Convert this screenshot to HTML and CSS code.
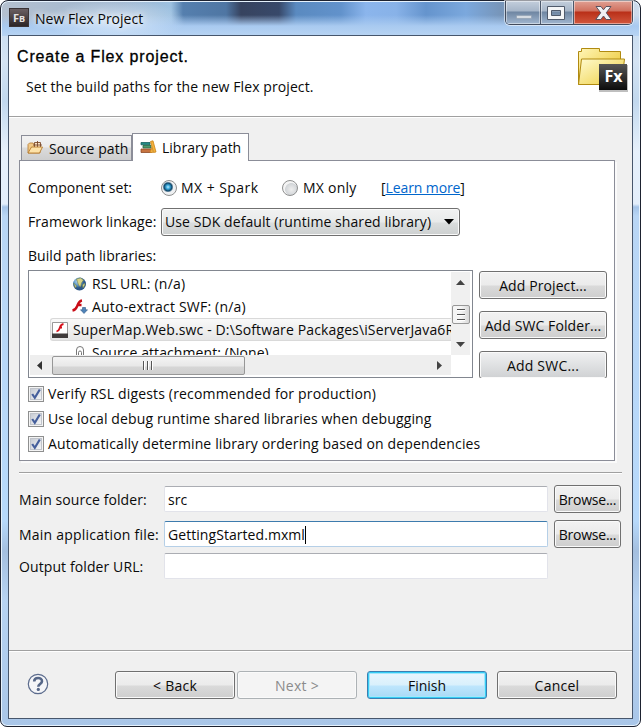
FILE: index.html
```html
<!DOCTYPE html>
<html lang="en">
<head>
<meta charset="utf-8">
<title>New Flex Project</title>
<link rel="stylesheet" href="styles.css">
</head>
<body>
<div class="window">
  <header class="titlebar">
    <span class="app-icon">F<small>B</small></span>
    <span class="caption">New Flex Project</span>
    <div class="controls">
      <span class="ctl min"><svg width="35" height="24"><rect x="10.500" y="14.500" width="15" height="3" fill="#d5dbe2" stroke="#8c9bad" stroke-width=".6"/></svg></span>
      <span class="ctl max"><svg width="32" height="24"><path d="M6.500 5.500h17v13h-17zM10.500 9.500v5h9v-5z" fill="#f4f5f7" stroke="#505a6b" fill-rule="evenodd"/></svg></span>
      <span class="ctl close"><svg width="58" height="24"><path d="M22 5.500h5l2.500 3.300 2.500-3.300h5l-4.700 6.300 5 6.700h-5.200l-2.600-3.500-2.600 3.500h-5.200l5-6.700z" fill="#f1f1f3" stroke="#5a5360"/></svg></span>
    </div>
  </header>

  <main class="client">
    <section class="banner">
      <div>
        <h1>Create a Flex project.</h1>
        <p class="subtitle">Set the build paths for the new Flex project.</p>
      </div>
      <svg class="folder" width="52" height="46" viewBox="0 0 52 46">
        <defs>
          <linearGradient id="fb" x1="0" y1="0" x2="1" y2="1"><stop offset="0" stop-color="#fff6b8"/><stop offset="1" stop-color="#e9bf1c"/></linearGradient>
          <linearGradient id="ff" x1="0" y1="0" x2="1" y2="1"><stop offset="0" stop-color="#fffbd0"/><stop offset="1" stop-color="#edcd3d"/></linearGradient>
          <linearGradient id="fx" x1="0" y1="0" x2="0" y2="1"><stop offset="0" stop-color="#565656"/><stop offset="1" stop-color="#0c0c0c"/></linearGradient>
        </defs>
        <path d="M1.500 37.500v-33h3v-3h18v3h21v33z" fill="url(#fb)" stroke="#b08a10"/>
        <path d="M1.500 37.500l3-25.500h43l-3 25.500z" fill="url(#ff)" stroke="#b08a10"/>
        <rect x="22" y="18" width="29" height="27" fill="#000" opacity=".25"/>
        <rect x="22" y="17" width="28" height="26" fill="url(#fx)"/>
        <text x="27.500" y="35" class="fx">Fx</text>
      </svg>
    </section>

    <section class="body">
      <nav class="tabs">
        <div class="tab tab-source">
          <svg width="17" height="15" viewBox="0 0 17 15"><path d="M1 13V4.500L2.500 3H6l1 1.500h6V13z" fill="#f2c987" stroke="#b98440" stroke-width=".9"/><path d="M7.500 2.500h6v5h-6zM6 5h9M10.500 1v6.500" fill="#fbe3c5" stroke="#7a4a2b" stroke-width=".9"/><path d="M1 13l3.500-6H15.500l-3 6z" fill="#fde2a8" stroke="#b57a2c" stroke-width=".9"/></svg>
          <span class="t-source">Source path</span>
        </div>
        <div class="tab tab-library">
          <svg width="17" height="15" viewBox="0 0 17 15"><path d="M1 2.500h9v2.300H1z" fill="#218b83" stroke="#17605e" stroke-width=".8"/><path d="M3 5.500h8v2.500H3z" fill="#4c9a6c" stroke="#2a6444" stroke-width=".8"/><path d="M1 9h10.500v3.500H1z" fill="#c77440" stroke="#8e4a26" stroke-width=".8"/><path d="M10.500 1.500l2.500-.7 3 11.200-2.500.5z" fill="#f4b23c" stroke="#c98317" stroke-width=".8"/><path d="M10 12.500l1.500-5 1.500 5z" fill="#f4b23c" stroke="#c98317" stroke-width=".6"/></svg>
          <span class="t-library">Library path</span>
        </div>
      </nav>

      <div class="panel">
        <div class="component-row">
          <span class="label t-comp">Component set:</span>
          <i class="radio on"></i><span class="mx-spark">MX + Spark</span>
          <i class="radio"></i><span class="mx-only">MX only</span>
          <span class="learn">[<a>Learn more</a>]</span>
        </div>
        <div class="linkage-row">
          <span class="label t-link">Framework linkage:</span>
          <div class="select"><span>Use SDK default (runtime shared library)</span><svg width="10" height="6"><path d="M0 0h10L5 5.500z"/></svg></div>
        </div>
        <div class="libs-label"><span>Build path libraries:</span></div>
        <div class="libs">
          <div class="list">
            <div class="rows">
              <div class="row child">
                <svg width="16" height="16" viewBox="0 0 16 16"><defs><radialGradient id="gl" cx=".35" cy=".3"><stop offset="0" stop-color="#b9dcf5"/><stop offset=".6" stop-color="#5b94c5"/><stop offset="1" stop-color="#2c5688"/></radialGradient></defs><circle cx="7.500" cy="8" r="6.500" fill="url(#gl)"/><path d="M4.500 3l4-1 3 2-2 3-1 4-2-2-1-3zM10.500 9l2-2 .5 2-2 3zM1.500 7l3 3-1 2z" fill="#d9d389" stroke="#698250" stroke-width=".6"/></svg>
                <span class="t-rsl">RSL URL: (n/a)</span>
              </div>
              <div class="row child">
                <svg width="16" height="16" viewBox="0 0 16 16"><path d="M10 1.500C6.500 2 6 5 5 7.500 4 10 3 11 .5 11.500M5.500 6h4" fill="none" stroke="#c90d17" stroke-width="2.400"/><path d="M10.500 8.500h3v2.300h2L12 14.500l-3.500-3.700h2z" fill="#4f83b8" stroke="#2b5686" stroke-width=".6"/></svg>
                <span class="t-auto">Auto-extract SWF: (n/a)</span>
              </div>
              <div class="row selected">
                <svg width="16" height="16" viewBox="0 0 16 16"><path d="M.5.500h15v15H.5z" fill="#fff" stroke="#999"/><path d="M0 11.500h16V16H0z" fill="#403b3b"/><path d="M11.500 2C8 2.500 8.500 4.500 7.500 6.500 7 8.500 6.500 9 4.500 9.500M7.500 5.500H10" fill="none" stroke="#d5101a" stroke-width="1.800"/></svg>
                <span class="t-super">SuperMap.Web.swc - D:\Software Packages\iServerJava6R</span>
              </div>
              <div class="row child">
                <svg width="16" height="16" viewBox="0 0 16 16"><path d="M4.500 16V5a3.500 3.500 0 0 1 7 0v11M6.500 16V7.500a1.500 1.500 0 0 1 3 0V16" fill="none" stroke="#777"/></svg>
                <span class="t-attach">Source attachment: (None)</span>
              </div>
            </div>
            <div class="vscroll">
              <svg width="9" height="5"><path d="M0 5h9L4.500 0z" fill="#444"/></svg>
              <i class="vthumb"><b></b><b></b><b></b></i>
              <svg width="9" height="5"><path d="M0 0h9L4.500 5z" fill="#444"/></svg>
            </div>
            <div class="hscroll">
              <svg width="5" height="9"><path d="M5 0v9L0 4.500z" fill="#333"/></svg>
              <i class="hthumb"><b></b><b></b><b></b></i>
              <svg class="right" width="5" height="9"><path d="M0 0v9l5-4.500z" fill="#444"/></svg>
            </div>
          </div>
          <div class="side">
            <div class="btn"><span>Add Project...</span></div>
            <div class="btn"><span>Add SWC Folder...</span></div>
            <div class="btn cut"><span class="t-adds">Add SWC...</span></div>
          </div>
        </div>
        <div class="checks">
          <div class="check"><svg width="16" height="16"><use href="#tick"/></svg><span class="t-c1">Verify RSL digests (recommended for production)</span></div>
          <div class="check"><svg width="16" height="16"><use href="#tick"/></svg><span class="t-c2">Use local debug runtime shared libraries when debugging</span></div>
          <div class="check"><svg width="16" height="16"><use href="#tick"/></svg><span class="t-c3">Automatically determine library ordering based on dependencies</span></div>
        </div>
      </div>

      <hr>

      <div class="fields">
        <span class="t-f1">Main source folder:</span><div class="input"><span>src</span></div><div class="btn browse"><span>Browse...</span></div>
        <span class="t-f2">Main application file:</span><div class="input focus"><span class="t-gs">GettingStarted.mxml</span><i class="caret"></i></div><div class="btn browse"><span>Browse...</span></div>
        <span class="t-f3">Output folder URL:</span><div class="input"></div>
      </div>
    </section>

    <footer class="footer">
      <svg class="help" width="22" height="22" viewBox="0 0 22 22"><circle cx="11" cy="11" r="9.700" fill="#f4f5f8" stroke="#5b6b8c" stroke-width="1.200"/><path d="M7.200 8.500C7.200 3.800 15 3.800 15 8.200c0 2.800-3.700 2.900-3.700 5.600" fill="none" stroke="#566788" stroke-width="2.600"/><circle cx="11.300" cy="16.400" r="1.600" fill="#566788"/></svg>
      <div class="btn back"><span>&lt; Back</span></div>
      <div class="btn next"><span>Next &gt;</span></div>
      <div class="btn finish"><span>Finish</span></div>
      <div class="btn cancel"><span>Cancel</span></div>
    </footer>
  </main>
</div>
<svg class="defs" width="0" height="0">
  <defs>
    <linearGradient id="cb" x1="0" y1="0" x2="1" y2="1"><stop offset="0" stop-color="#c5cad3"/><stop offset="1" stop-color="#f6f7f8"/></linearGradient>
    <g id="tick"><rect x=".5" y=".5" width="15" height="15" fill="#f4f4f4" stroke="#8e8f8f"/><rect x="2.500" y="2.500" width="11" height="11" fill="url(#cb)" stroke="#c0c4cb"/><path d="M4.200 8l2.600 3.800L11.800 3.500" fill="none" stroke="#455f9c" stroke-width="2.200"/></g>
  </defs>
</svg>
</body>
</html>
```
FILE: styles.css
```css
* { box-sizing: border-box; }
body {
  margin: 0;
  background: #fff;
  color: #0a0a0a;
  font: 14px/20px "Open Sans", "Noto Sans", sans-serif;
  overflow: hidden;
}
span { white-space: nowrap; }
svg { display: block; flex: none; }
.defs { position: absolute; }
.window {
  width: 641px;
  height: 727px;
  padding: 0 7px 7px;
  border: 1px solid #1d2230;
  border-radius: 8px 8px 7px 7px;
  box-shadow: inset 0 0 0 1px #e6f2fd;
  background:
    radial-gradient(ellipse 70px 22px at 115px 20px, rgba(222, 236, 250, .8) 0, transparent 100%),
    linear-gradient(180deg, transparent 14px, #a9caf0 25px, #b8d4f3 35px, transparent 36px) 0 0 / 100% 35px no-repeat,
    linear-gradient(90deg, #b4c0cf 0, #9fb6cf 120px, #9cc0e0 170px, #557fae 182px, #4f76a3 225px, #37435f 240px, #38496a 278px, #5a8ac0 295px, #6292cb 340px, #8bb5ec 365px, #88b2e8 395px, #6594cd 425px, #7ba8dd 465px, #7795b9 500px, #a6bdd6 560px, #cfdded 641px) 0 0 / 100% 35px no-repeat,
    linear-gradient(180deg, #c3d9f0 0, #d4e3f3 60px, #c2d8ee 100px, #e6f0fb 150px, #e3eefb 203px, #a5c4e8 206px, #b9d6f5 215px, #b7d9fb 520px, #a4bfdf 550px, #b7d3f2 600px, #a9c6e8 727px);
}
.titlebar { height: 34px; display: flex; align-items: flex-start; padding-left: 1px; }
.app-icon {
  width: 20px; height: 19px; margin-top: 7px;
  background: linear-gradient(#6a5f62, #2c2526);
  border: 1px solid #3a3335;
  color: #e6e2e2;
  font: bold 11px/17px "Open Sans", sans-serif;
  text-align: center;
}
.app-icon small { font-size: 9px; }
.caption { margin: 8px 0 0 6px; text-shadow: 0 0 6px #fff, 0 0 8px rgba(255,255,255,.8); }
.controls {
  display: flex; margin-left: auto; margin-right: 0; height: 24px;
  border: 1px solid #424b5c; border-top: 0; border-radius: 0 0 5px 5px;
  box-shadow: 0 0 0 1px rgba(255,255,255,.55); overflow: hidden;
}
.ctl { height: 23px; box-shadow: inset 0 0 0 1px rgba(255,255,255,.45); }
.min, .max { background: linear-gradient(#c3cedc 0, #a6b5c8 10px, #6f86a2 11px, #a1b6cf 23px); border-right: 1px solid #4c586b; }
.min { width: 35px; }
.max { width: 33px; }
.close { width: 58px; background: linear-gradient(#e0a093 0, #d0705e 10px, #b92f18 11px, #d2573d 23px); }

.client { height: 684px; border: 1px solid #47566c; background: #f0f0f0; display: flex; flex-direction: column; }
.banner { height: 81px; background: #fff; border-bottom: 1px solid #a0a0a0; display: flex; justify-content: space-between; padding: 11px 3px 0 8px; }
h1 { margin: 0; font: 16px/20px "Liberation Sans", sans-serif; color: #000; -webkit-text-stroke: .3px #000; letter-spacing: .86px; }
.subtitle { margin: 10px 0 0 9px; white-space: nowrap; letter-spacing: .09px; }
.fx { font: bold 16px "Open Sans", sans-serif; fill: #fff; }
.body { flex: 1; border-top: 1px solid #fff; padding: 15px 9px 0 10px; }

.tabs { display: flex; align-items: flex-end; height: 28px; margin-bottom: -1px; padding-left: 2px; position: relative; }
.tab { display: flex; align-items: center; border: 1px solid #8b8d98; border-bottom: 0; }
.tab-source { width: 111px; height: 26px; padding: 1px 0 0 5px; gap: 5px; background: linear-gradient(#f2f2f2 0, #ebebeb 11px, #dbdbdb 12px, #cecece); border-bottom: 1px solid #8b8d98; }
.tab-source svg { margin-top: -2px; }
.tab-library { width: 117px; height: 28px; padding-left: 7px; gap: 5px; background: #fff; }
.tab-library svg { margin-top: -1px; }
.t-source { letter-spacing: .08px; }

.panel { width: 596px; height: 301px; border: 1px solid #8b8d98; background: #fff; padding: 16px 7px 0 8px; box-shadow: 2px 2px 0 #fafafa; }
.component-row { display: flex; align-items: center; height: 22px; }
.label { width: 133px; }
.t-link { letter-spacing: .05px; }
.radio { width: 16px; height: 16px; border-radius: 50%; border: 1px solid #8e8f8f; background: radial-gradient(circle at 60% 60%, #eee 0, #d2d5d8 50%, #f4f4f4 56%); }
.radio.on { background: radial-gradient(circle at 6px 6px, #b8eaff 0, #38a6d8 2px, #0d4265 4px, transparent 5.500px), #eef0f2; }
.mx-spark { width: 101px; margin-left: 4px; letter-spacing: .45px; }
.mx-only { width: 78px; margin-left: 5px; letter-spacing: .25px; }
.learn { letter-spacing: -.1px; }
.learn a { color: #0066cc; text-decoration: underline; }
.linkage-row { display: flex; align-items: center; height: 29px; margin-top: 8px; }
.select {
  width: 299px; height: 28px; display: flex; align-items: center; justify-content: space-between; padding: 0 5px 0 3px;
  border: 1px solid #707070; border-radius: 3px; box-shadow: inset 0 0 0 1px #fafafa; letter-spacing: .08px;
  background: linear-gradient(#f1f2f2 0, #e8eaea 13px, #dadddd 14px, #cdd0d0);
}
.libs-label { height: 20px; margin-top: 10px; letter-spacing: .05px; }
.libs { display: flex; gap: 6px; margin-top: 4px; }
.list {
  width: 445px; height: 108px; border: 1px solid #828790; padding: 1px;
  display: grid; grid-template: 83px 1fr / 421px 1fr;
}
.rows { overflow: hidden; }
.row { height: 23px; display: flex; align-items: center; gap: 4px; }
.child { padding-left: 42px; }
.t-rsl, .t-auto { letter-spacing: .2px; }
.t-super { letter-spacing: .13px; }
.t-attach { letter-spacing: .08px; }
.selected { margin-left: 20px; padding-left: 1px; gap: 5px; border: 1px solid #d9d9d9; border-right: 0; border-radius: 3px 0 0 3px; background: linear-gradient(#f9f9f9, #e6e6e6); }
.vscroll { width: 19px; background: #f0f0f0; display: flex; flex-direction: column; align-items: center; padding-top: 8px; }
.vthumb { width: 18px; height: 19px; margin: 20px 0 18px; padding: 3px 4px; border: 1px solid #979797; border-radius: 2px; background: linear-gradient(90deg, #f5f5f5 50%, #d8d8d8); display: flex; flex-direction: column; justify-content: space-between; }
.vthumb b { height: 1px; background: #555; box-shadow: 0 1px #fff; }
.hscroll { height: 20px; background: #eee; display: flex; align-items: center; padding-left: 7px; }
.hthumb { width: 193px; height: 19px; margin-left: 10px; border: 1px solid #979797; border-radius: 2px; background: linear-gradient(#f4f4f4 0, #e8e8e8 9px, #d6d6d6 10px, #cfcfcf); display: flex; gap: 3px; align-items: center; justify-content: center; }
.hthumb b { width: 1px; height: 9px; background: #555; box-shadow: 1px 0 #fff; }
.hthumb b:first-child { margin-left: -3px; }
.right { margin-left: auto; margin-right: 9px; }
.btn {
  width: 120px; height: 28px; display: flex; align-items: center; justify-content: center; padding-top: 1px;
  border: 1px solid #707070; border-radius: 3px; box-shadow: inset 0 0 0 1px #fafafa;
  background: linear-gradient(#f2f2f2 0, #ebebeb 13px, #dadada 14px, #cecece);
}
.side { display: flex; flex-direction: column; gap: 12px; padding-top: 1px; height: 108px; overflow: hidden; letter-spacing: .1px; }
.side .btn { width: 128px; flex: none; }
.side .cut { background: linear-gradient(#f0f1f2, #cfd1d3); }
.t-adds { letter-spacing: .2px; }
.checks { margin-top: 3px; }
.check { display: flex; align-items: center; gap: 4px; height: 25px; }
.t-c1 { letter-spacing: .17px; }
.t-c2, .t-c3 { letter-spacing: .135px; }

hr { margin: 11px 0 0; height: 2px; width: 603px; border: 0; border-top: 1px solid #a0a0a0; border-bottom: 1px solid #fff; }
.fields { display: grid; grid-template-columns: 145px 384px 67px; grid-template-rows: 28px 28px 26px; row-gap: 7px; align-items: center; margin-top: 11px; width: 603px; }
.fields > span { padding-top: 2px; }
.fields > .input:last-child { margin-top: -4px; }
.fields > .t-f3 { margin-top: -4px; letter-spacing: .1px; }
.t-f1 { letter-spacing: .08px; }
.t-f2 { letter-spacing: .22px; }
.t-gs { letter-spacing: .06px; }
.input { height: 26px; display: flex; align-items: center; padding: 1px 0 0 3px; border: 1px solid #e2e3ea; border-top-color: #abadb3; border-radius: 2px; background: #fff; }
.focus { border-color: #b5cfe7; border-top-color: #3d7bad; }
.caret { width: 1px; height: 18px; background: #000; }
.browse { width: 67px; margin-left: 6px; letter-spacing: -.25px; }

.footer { height: 68px; border-top: 1px solid #a0a0a0; box-shadow: inset 0 1px #fff; display: flex; padding: 20px 0 0 18px; letter-spacing: .25px; }
.help { margin-top: 2px; }
.back { margin-left: 66px; }
.next { margin-left: 2px; color: #8b8b8b; background: #f4f4f4; border-color: #adb2b5; }
.finish { margin-left: 10px; letter-spacing: 0; border-color: #3c7fb1; box-shadow: inset 0 0 0 1px #35cdf5, inset 0 0 0 2px #a4e6fb; background: linear-gradient(#eaf6fd 0, #d9f0fc 13px, #bee6fd 14px, #a7d9f5); }
.cancel { margin-left: 10px; }
```
